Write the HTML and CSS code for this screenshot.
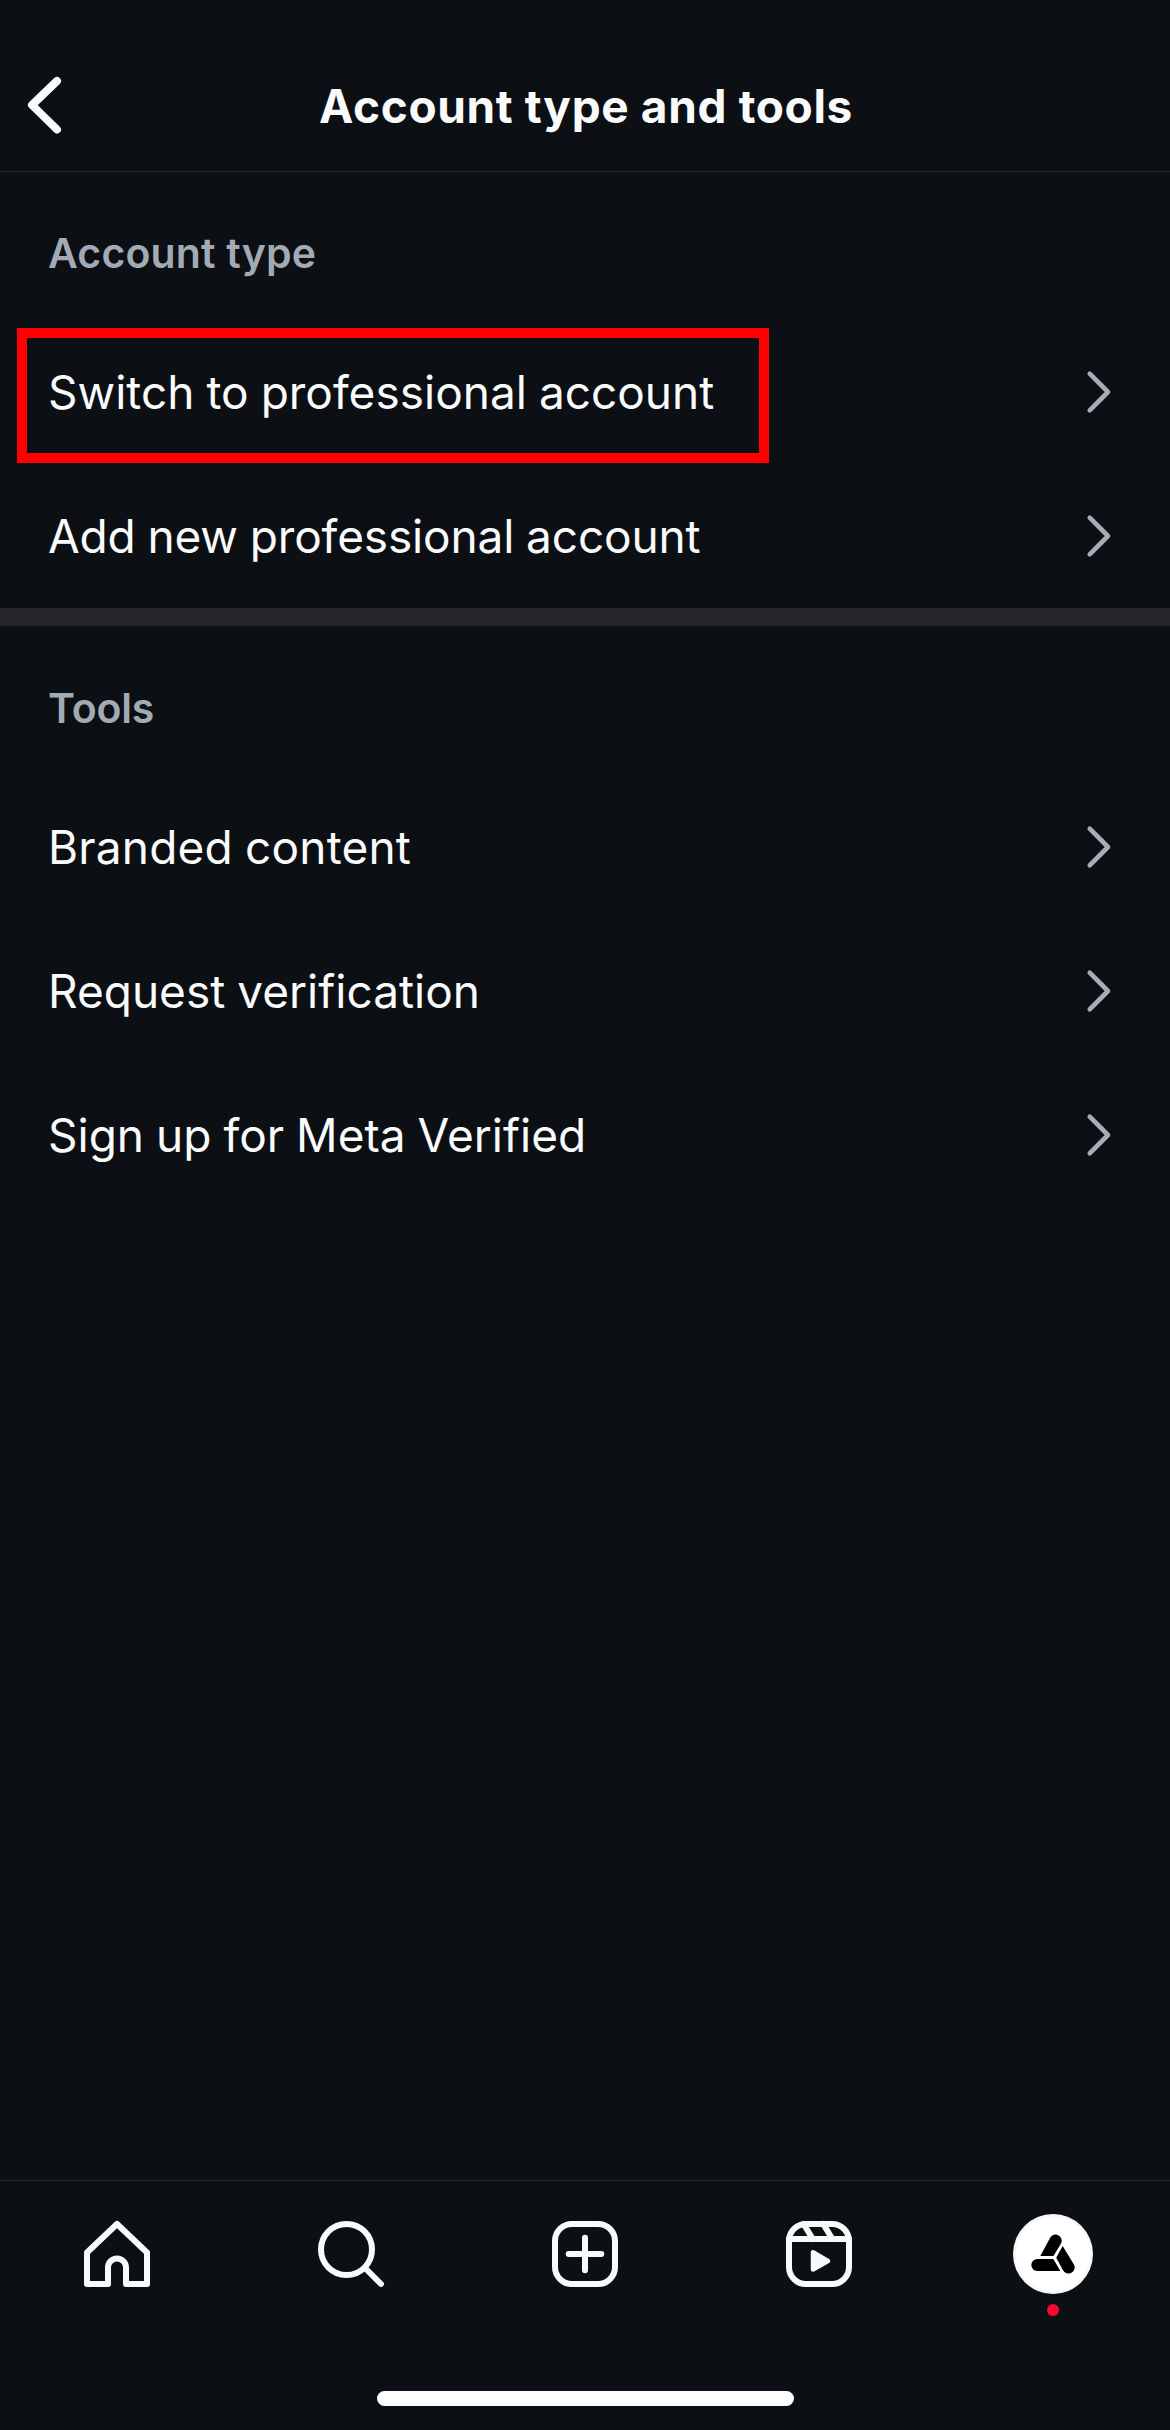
FILE: index.html
```html
<!DOCTYPE html>
<html lang="en">

<head>
    <meta charset="UTF-8">
    <meta name="viewport" content="width=device-width, initial-scale=1.0">
    <title>Account type and tools</title>
    <link rel="stylesheet" href="styles.css">
</head>

<body>
    <div class="screen">
        <header class="header">
            <a class="back" aria-label="Back">
                <svg width="45" height="64" viewBox="0 0 45 64">
                    <path d="M37 8 12 32 37 56.5" />
                </svg>
            </a>
            <h1>Account type and tools</h1>
        </header>

        <main class="content">
            <section class="section">
                <h2>Account type</h2>
                <a class="row highlighted">
                    <span>Switch to professional account</span>
                    <svg class="chevron" width="30" height="48" viewBox="0 0 30 48">
                        <path d="M5.7 5.7 24 24 5.7 42.3" />
                    </svg>
                </a>
                <a class="row">
                    <span class="tight">Add new professional account</span>
                    <svg class="chevron" width="30" height="48" viewBox="0 0 30 48">
                        <path d="M5.7 5.7 24 24 5.7 42.3" />
                    </svg>
                </a>
            </section>

            <section class="section tools">
                <h2>Tools</h2>
                <a class="row">
                    <span class="wide">Branded content</span>
                    <svg class="chevron" width="30" height="48" viewBox="0 0 30 48">
                        <path d="M5.7 5.7 24 24 5.7 42.3" />
                    </svg>
                </a>
                <a class="row">
                    <span>Request verification</span>
                    <svg class="chevron" width="30" height="48" viewBox="0 0 30 48">
                        <path d="M5.7 5.7 24 24 5.7 42.3" />
                    </svg>
                </a>
                <a class="row">
                    <span>Sign up for Meta Verified</span>
                    <svg class="chevron" width="30" height="48" viewBox="0 0 30 48">
                        <path d="M5.7 5.7 24 24 5.7 42.3" />
                    </svg>
                </a>
            </section>
        </main>

        <footer class="footer">
            <nav class="tabs">
                <a class="tab" aria-label="Home">
                    <svg class="icon" viewBox="0 0 72 72">
                        <path d="M27 66V49.5a9 9 0 0 1 18 0V66h21V34.5L36 6 6 34.5V66z" />
                    </svg>
                </a>
                <a class="tab" aria-label="Search">
                    <svg class="icon" viewBox="0 0 72 72">
                        <circle cx="31.5" cy="31.5" r="25.5" />
                        <path d="M50 50 66 66" />
                    </svg>
                </a>
                <a class="tab" aria-label="Create">
                    <svg class="icon" viewBox="0 0 72 72">
                        <rect x="6" y="6" width="60" height="60" rx="17" />
                        <path d="M36 19.7v32.6M19.7 36h32.6" />
                    </svg>
                </a>
                <a class="tab" aria-label="Reels">
                    <svg class="icon" viewBox="0 0 72 72">
                        <rect x="6" y="6" width="60" height="60" rx="17" />
                        <path d="M6 21h60M20.6 6l9.2 15M40.2 6l9.2 15" />
                        <path class="solid" d="M30 34.3v17.2L45 43z" />
                    </svg>
                </a>
                <a class="tab" aria-label="Profile">
                    <svg class="avatar" width="80" height="80" viewBox="0 0 80 80">
                        <circle class="ring" cx="40" cy="40" r="40" />
                        <circle class="face" cx="40" cy="40" r="37" />
                        <path d="M27.3 42 37.3 23.5a6.2 6.2 0 0 1 11 5.6L40.5 42z" />
                        <path d="M40.3 45 47.4 57H24.3a6 6 0 0 1 0-12z" />
                        <path d="M49.7 32 43.2 43.7 50.2 56.4a6.1 6.1 0 0 0 10.7-5.9z" />
                    </svg>
                    <i class="dot"></i>
                </a>
            </nav>
            <div class="home-bar"></div>
        </footer>
    </div>
</body>

</html>
```

FILE: styles.css
```css
/* Global styles */
* {
    box-sizing: border-box;
}

body {
    margin: 0;
    background-color: #0c0f14;
    color: #f9fafa;
    font-family: Inter, "Liberation Sans", sans-serif;
}

.screen {
    display: flex;
    flex-direction: column;
    height: 2430px;
}

svg {
    display: block;
    fill: none;
    stroke-linecap: round;
    stroke-linejoin: round;
}

/* Header */
.header {
    display: grid;
    grid-template-columns: 120px 1fr 120px;
    align-items: center;
    height: 172px;
    padding-top: 41px;
    border-bottom: 1px solid #23272c;
}

.back {
    padding: 0 0 2px 20px;
}

.back svg {
    stroke: #f9fafa;
    stroke-width: 8;
}

h1 {
    margin: 0;
    padding-left: 2px;
    font-size: 46px;
    font-weight: 700;
    line-height: 56px;
    letter-spacing: 0.64px;
    text-align: center;
    white-space: nowrap;
}

/* List sections */
.content {
    flex: 1;
}

h2 {
    display: flex;
    align-items: center;
    height: 148px;
    margin: 0;
    padding: 13px 48px 0;
    color: #a2aab4;
    font-size: 41px;
    font-weight: 600;
    letter-spacing: 0.15px;
}

.tools {
    border-top: 18px solid #242529;
}

.tools h2 {
    height: 149px;
    padding-top: 15px;
    letter-spacing: -0.2px;
}

.row {
    position: relative;
    display: flex;
    align-items: center;
    justify-content: space-between;
    height: 144px;
    padding: 0 56px 0 48px;
    font-size: 46px;
    word-spacing: -0.9px;
}

.tight {
    letter-spacing: -0.15px;
}

.wide {
    letter-spacing: 0.18px;
}

.chevron {
    stroke: #a5adb7;
    stroke-width: 4.6;
}

/* red frame over the first row */
.highlighted::after {
    content: "";
    box-sizing: border-box;
    position: absolute;
    top: 8px;
    left: 17px;
    width: 752px;
    height: 135px;
    border: 10px solid #ff0000;
}

/* Bottom tab bar */
.footer {
    height: 250px;
    border-top: 1px solid #25282d;
}

.tabs {
    display: grid;
    grid-template-columns: repeat(5, 1fr);
    height: 146px;
}

.tab {
    position: relative;
    display: flex;
    align-items: center;
    justify-content: center;
}

.icon {
    width: 72px;
    height: 72px;
    stroke: #f9fafa;
    stroke-width: 6;
}

.icon .solid {
    fill: #f9fafa;
    stroke-width: 4.5;
}

.avatar .ring {
    fill: #f7f9f9;
}

.avatar .face {
    fill: #ffffff;
}

.avatar path {
    fill: #000000;
}

.dot {
    position: absolute;
    top: 123px;
    left: 111px;
    width: 12px;
    height: 12px;
    border-radius: 50%;
    background-color: #ff0530;
}

.home-bar {
    width: 417px;
    height: 15px;
    margin: 64px auto 0;
    border-radius: 8px;
    background-color: #ffffff;
}
```
